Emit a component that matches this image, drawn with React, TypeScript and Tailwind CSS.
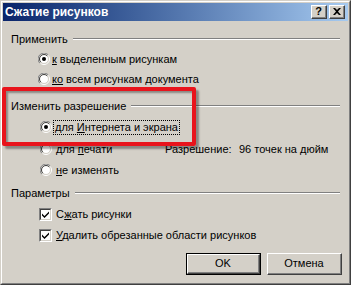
import React from "react";

function Radio({ checked }: { checked?: boolean }) {
  return (
    <svg width="12" height="12" viewBox="0 0 12 12" className="shrink-0">
      <path d="M10 2 A5.5 5.5 0 0 0 2 10" fill="none" stroke="#808080" strokeWidth="1" transform="translate(0,0)" />
      <circle cx="6" cy="6" r="5.5" fill="none" stroke="#ffffff" strokeWidth="1" />
      <path d="M10.2 1.8 A5.9 5.9 0 0 0 1.8 10.2" fill="none" stroke="#808080" strokeWidth="1" />
      <circle cx="6" cy="6" r="4.5" fill="#ffffff" stroke="#d4d0c8" strokeWidth="1" />
      <path d="M9.2 2.8 A4.5 4.5 0 0 0 2.8 9.2" fill="none" stroke="#404040" strokeWidth="1" />
      {checked && <circle cx="6" cy="6" r="2" fill="#000000" />}
    </svg>
  );
}

function Check() {
  return (
    <div className="w-[13px] h-[13px] shrink-0 border-t border-l border-t-[#808080] border-l-[#808080] border-b border-r border-b-white border-r-white">
      <div className="w-full h-full border-t border-l border-t-[#404040] border-l-[#404040] border-b border-r border-b-[#d4d0c8] border-r-[#d4d0c8] bg-white">
        <svg width="9" height="9" viewBox="0 0 9 9">
          <path d="M1 3.5 L3.5 6 L8 1.5 L8 3.5 L3.5 8 L1 5.5 Z" fill="#000" />
        </svg>
      </div>
    </div>
  );
}

function GroupLabel({ text }: { text: string }) {
  return (
    <div className="flex items-center h-[16px] pl-[8px] pr-[8px]">
      <span className="whitespace-nowrap">{text}</span>
      <div className="flex-1 ml-[5px] flex flex-col">
        <div className="h-px bg-[#808080]" />
        <div className="h-px bg-white" />
      </div>
    </div>
  );
}

function TitleBtn({ children }: { children: React.ReactNode }) {
  return (
    <div className="w-[16px] h-[14px] bg-[#d4d0c8] border-t border-l border-t-white border-l-white border-b border-r border-b-[#404040] border-r-[#404040]">
      <div className="w-full h-full border-b border-r border-b-[#808080] border-r-[#808080] flex items-center justify-center text-black font-bold text-[11px] leading-none">
        {children}
      </div>
    </div>
  );
}

export default function App() {
  return (
    <div className="w-[351px] h-[285px] bg-[#d4d0c8] font-['Liberation_Sans',sans-serif] text-[11px] text-black leading-[13px] border-t border-l border-t-[#d4d0c8] border-l-[#d4d0c8] border-b border-r border-b-[#404040] border-r-[#404040] relative">
      <div className="w-full h-full border-t border-l border-t-white border-l-white border-b border-r border-b-[#808080] border-r-[#808080] p-[1px] flex flex-col">
        {/* title bar */}
        <div className="h-[18px] flex items-center bg-gradient-to-r from-[#0a246a] to-[#a6caf0] pl-[2px] pr-[2px]">
          <span className="text-white font-bold text-[12px] flex-1">Сжатие рисунков</span>
          <div className="flex gap-[2px] mr-[1px]">
            <TitleBtn>?</TitleBtn>
            <TitleBtn>
              <svg width="8" height="7" viewBox="0 0 8 7">
                <path d="M0 0 L2 0 L4 2 L6 0 L8 0 L5 3.5 L8 7 L6 7 L4 5 L2 7 L0 7 L3 3.5 Z" fill="#000" />
              </svg>
            </TitleBtn>
          </div>
        </div>

        <div className="mt-[10px]">
          <GroupLabel text="Применить" />
        </div>
        <div className="flex items-center h-[20px] mt-[2px] pl-[35px]">
          <Radio checked />
          <span className="ml-[2px]"><u>к</u> выделенным рисункам</span>
        </div>
        <div className="flex items-center h-[20px] pl-[35px]">
          <Radio />
          <span className="ml-[2px]"><u>ко</u> всем рисункам документа</span>
        </div>

        <div className="mt-[9px]">
          <GroupLabel text="Изменить разрешение" />
        </div>
        <div className="flex items-center h-[20px] mt-[3px] pl-[37px]">
          <Radio checked />
          <span className="ml-[2px] px-[1px] outline outline-1 outline-dotted outline-black -outline-offset-0">
            для <u>И</u>нтернета и экрана
          </span>
        </div>
        <div className="flex items-center h-[20px] mt-[2px] pl-[37px]">
          <Radio />
          <span className="ml-[4px] w-[109px]">для <u>п</u>ечати</span>
          <span className="w-[74px]">Разрешение:</span>
          <span>96 точек на дюйм</span>
        </div>
        <div className="flex items-center h-[20px] mt-[1px] pl-[37px]">
          <Radio />
          <span className="ml-[4px]"><u>н</u>е изменять</span>
        </div>

        <div className="mt-[5px]">
          <GroupLabel text="Параметры" />
        </div>
        <div className="flex items-center h-[20px] mt-[3px] pl-[36px]">
          <Check />
          <span className="ml-[4px]">С<u>ж</u>ать рисунки</span>
        </div>
        <div className="flex items-center h-[20px] mt-[1px] pl-[36px]">
          <Check />
          <span className="ml-[4px]"><u>У</u>далить обрезанные области рисунков</span>
        </div>

        <div className="flex justify-end gap-[6px] mt-[8px] pr-[6px]">
          <div className="w-[75px] h-[22px] border border-black">
            <div className="w-full h-full border-t border-l border-t-white border-l-white border-b border-r border-b-[#404040] border-r-[#404040]">
              <div className="w-full h-full border-b border-r border-b-[#808080] border-r-[#808080] flex items-center justify-center">OK</div>
            </div>
          </div>
          <div className="w-[75px] h-[22px] border-t border-l border-t-white border-l-white border-b border-r border-b-[#404040] border-r-[#404040]">
            <div className="w-full h-full border-b border-r border-b-[#808080] border-r-[#808080] flex items-center justify-center">Отмена</div>
          </div>
        </div>
      </div>

      {/* red annotation frame */}
      <div className="absolute left-[1px] top-[86px] w-[194px] h-[59px] border-[4px] border-[#e8141c] rounded-[2px] shadow-[inset_2px_2px_2px_rgba(0,0,0,0.35),3px_3px_2px_rgba(0,0,0,0.35)]" />
    </div>
  );
}
